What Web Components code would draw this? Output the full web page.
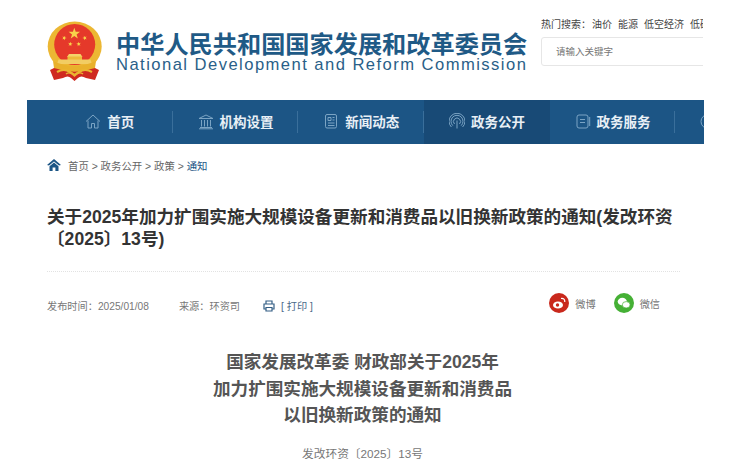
<!DOCTYPE html>
<html lang="zh">
<head>
<meta charset="utf-8">
<style>
  html, body { margin: 0; padding: 0; background: #fff; overflow: hidden; }
  body { font-family: "Liberation Sans", "Noto Sans CJK SC", sans-serif; color: #333; }
  #page { display: block; width: 704px; height: 473px; overflow: hidden; }
</style>
</head>
<body>
<div id="page">
  <site-header></site-header>
  <main-nav>
    <nav-item label="首页" icon="home"></nav-item>
    <nav-item label="机构设置" icon="bank"></nav-item>
    <nav-item label="新闻动态" icon="news"></nav-item>
    <nav-item label="政务公开" icon="signal" active></nav-item>
    <nav-item label="政务服务" icon="doc"></nav-item>
    <nav-item icon="chat" last></nav-item>
  </main-nav>
  <bread-crumb></bread-crumb>
  <article-view></article-view>
</div>

<script>
const FONT = '"Liberation Sans", "Noto Sans CJK SC", sans-serif';

// Five pointed star for the emblem
function star(cx, cy, r, rot = 0) {
    const pts = [];
    for (let i = 0; i < 10; i++) {
        const len = i % 2 ? r * 0.4 : r;
        const a = (rot - 90 + i * 36) * Math.PI / 180;
        pts.push(`${(cx + len * Math.cos(a)).toFixed(2)},${(cy + len * Math.sin(a)).toFixed(2)}`);
    }
    return `<polygon points="${pts.join(' ')}" fill="#f8d24a"/>`;
}

/**
 * Top band: national emblem, commission name, hot searches and search box
 */
class SiteHeader extends HTMLElement {
    connectedCallback() {
        this.root = this.attachShadow({mode: 'open'});
        this.root.innerHTML = `
            <style>
                :host { display: flex; height: 100px; padding-left: 46px; box-sizing: border-box; font-family: ${FONT}; overflow: hidden; }
                .emblem { width: 57px; height: 61px; margin-top: 21px; flex: none; }
                .name { margin-left: 13px; margin-top: 33px; width: 412px; flex: none; color: #1f5a86; }
                .cn { font-size: 24.2px; line-height: 24px; font-weight: 700; white-space: nowrap; }
                .en { font-size: 16.6px; line-height: 16px; margin-top: 0; letter-spacing: 1.45px; white-space: nowrap; color: #2a5f88; }
                .side { margin-left: 13px; margin-top: 18px; flex: none; width: 162px; overflow: hidden; }
                .hot { font-size: 10px; line-height: 14px; color: #444; white-space: nowrap; }
                .hot span { margin-right: 6px; }
                .hot span:first-child { margin-right: 1px; }
                .box { margin-top: 5px; height: 29px; width: 190px; border: 1px solid #e6e6e6; border-radius: 3px; box-sizing: border-box; padding-left: 14px; font-size: 9.5px; line-height: 27px; color: #777; }
            </style>
            <svg class="emblem" viewBox="0 0 57 61">
                <path d="M10 46 L4 49 L8 59 L17 57 Q22 54 25 57 L28.5 60 L32 57 Q35 54 40 57 L49 59 L53 49 L47 46 Z" fill="#cf2a20"/>
                <ellipse cx="28.7" cy="25.5" rx="27" ry="25" fill="#ecb733"/>
                <circle cx="28.7" cy="23.5" r="20.5" fill="#e5392a"/>
                ${star(28.3, 12.7, 6)}
                ${star(18.3, 17, 2.4, 20)}
                ${star(38.7, 17, 2.4, -20)}
                ${star(24.3, 23, 2.4, 10)}
                ${star(32.7, 23, 2.4, -10)}
                <path d="M23 33 L21 36 H36.5 L34.5 33 Z" fill="#f5d46a"/>
                <rect x="21.5" y="35.5" width="14.5" height="3.5" fill="#eebb3a"/>
                <path d="M12.5 38.5 H44.5 L46 43 H11 Z" fill="#f2cd63"/>
                <path d="M7 40 Q28 50 50 40 L49 47 Q28 54 8 47 Z" fill="#e9b12c"/>
                <path d="M11 51 Q18 47 24 51 L28.5 54 L33 51 Q39 47 46 51" stroke="#eab531" stroke-width="2.2" fill="none"/>
                <path d="M20 53 Q24 50 28.5 55 Q33 50 37 53" stroke="#eab531" stroke-width="1.4" fill="none"/>
            </svg>
            <div class="name">
                <div class="cn">中华人民共和国国家发展和改革委员会</div>
                <div class="en">National Development and Reform Commission</div>
            </div>
            <div class="side">
                <div class="hot"><span>热门搜索：</span><span>油价</span><span>能源</span><span>低空经济</span><span>低碳</span></div>
                <div class="box">请输入关键字</div>
            </div>`;
    }
}
customElements.define('site-header', SiteHeader);

/**
 * Blue navigation bar
 */
class MainNav extends HTMLElement {
    connectedCallback() {
        this.root = this.attachShadow({mode: 'open'});
        this.root.innerHTML = `
            <style>
                :host { display: flex; height: 44px; margin-left: 27px; padding-left: 20px; box-sizing: border-box; background: #1c5585; overflow: hidden; }
            </style>
            <slot></slot>`;
    }
}
customElements.define('main-nav', MainNav);

const NAV_ICONS = {
    home: '<path d="M1 8.5 L8 2 L15 8.5 M3 7.5 V15 H6.5 V10.5 H9.5 V15 H13 V7.5"/>',
    bank: '<path d="M1 5.5 L8 2 L15 5.5 Z M2 14.5 H14 M1 15.8 H15 M3.5 7 V13.5 M6.5 7 V13.5 M9.5 7 V13.5 M12.5 7 V13.5"/>',
    news: '<rect x="2.5" y="1.5" width="11" height="13.5" rx="1.5"/><path d="M5 4.5 H8 V7.5 H5 Z M9.5 4.5 H11.5 M9.5 7 H11.5 M5 10 H11.5 M5 12.5 H11.5"/>',
    signal: '<path d="M8 15.5 V7.5 M5.5 11 A3.5 3.5 0 1 1 10.5 11 M3.8 12.6 A6 6 0 1 1 12.2 12.6 M2.4 14 A8 8 0 1 1 13.6 14"/>',
    doc: '<rect x="2" y="2" width="11" height="13" rx="2"/><path d="M5 6.5 H10 M5 9.5 H10 M14.7 4 V13"/>',
    chat: '<circle cx="9" cy="8.5" r="7"/>'
};

/**
 * One navigation entry: icon plus label, divided from its neighbours
 */
class NavItem extends HTMLElement {
    connectedCallback() {
        const icon = NAV_ICONS[this.getAttribute('icon')];
        const label = this.getAttribute('label');
        this.root = this.attachShadow({mode: 'open'});
        this.root.innerHTML = `
            <style>
                :host { display: flex; flex: none; width: 125.7px; height: 44px; padding-bottom: 2px; box-sizing: border-box; align-items: center; justify-content: center; gap: 6px; position: relative; font-family: ${FONT}; font-size: 13.5px; font-weight: 700; color: #e8eff5; white-space: nowrap; }
                :host([active]) { background: #184a76; }
                :host::after { content: ""; position: absolute; right: 0; top: 11px; height: 22px; width: 1px; background: #3a6f9b; }
                :host([active])::after { display: none; }
                :host([last]) { justify-content: flex-start; padding-left: 24px; }
                svg { width: 16px; height: 17px; fill: none; stroke: #7ba4c4; stroke-width: 1; flex: none; }
            </style>
            <svg viewBox="0 0 16 17">${icon}</svg>${label ? `<span>${label}</span>` : ''}`;
    }
}
customElements.define('nav-item', NavItem);

/**
 * Breadcrumb row under the navigation bar
 */
class BreadCrumb extends HTMLElement {
    connectedCallback() {
        this.root = this.attachShadow({mode: 'open'});
        this.root.innerHTML = `
            <style>
                :host { display: flex; align-items: center; height: 16px; margin: 13px 0 0 47px; font-family: ${FONT}; font-size: 10.4px; color: #666; white-space: nowrap; }
                svg { width: 14px; height: 12px; margin-right: 7px; fill: #1c5585; }
                b { font-weight: 400; color: #1c5585; }
            </style>
            <svg viewBox="0 0 14 12"><path d="M7 0 L14 6 L12 6.6 L7 2.4 L2 6.6 L0 6 Z M7 3.4 L11.5 7.2 V12 H8.4 V8.4 H5.6 V12 H2.5 V7.2 Z"/></svg>
            <span>首页 &gt; 政务公开 &gt; 政策 &gt; <b>通知</b></span>`;
    }
}
customElements.define('bread-crumb', BreadCrumb);

/**
 * Article: title, meta row with sharing, centred heading and document number
 */
class ArticleView extends HTMLElement {
    connectedCallback() {
        this.root = this.attachShadow({mode: 'open'});
        this.root.innerHTML = `
            <style>
                :host { display: block; padding: 0 24px 0 47px; font-family: ${FONT}; }
                h1 { margin: 33px 0 0; font-size: 17.6px; line-height: 22px; font-weight: 700; color: #333; }
                .meta { display: flex; align-items: center; margin-top: 21px; padding-top: 21px; border-top: 1px dotted #e2e2e2; height: 24px; font-size: 10.2px; color: #777; white-space: nowrap; }
                .src { margin-left: 30px; }
                .print { display: flex; align-items: center; gap: 6px; margin-left: 23px; color: #4a6a88; }
                .print svg { width: 12px; height: 12px; margin-top: 2px; fill: none; stroke: #345f85; stroke-width: 1.2; }
                .share { display: flex; align-items: center; margin-left: auto; margin-right: 20px; margin-bottom: 4px; }
                .share svg { width: 20px; height: 20px; margin-right: 6px; }
                .share span + svg { margin-left: 18px; }
                h2 { margin: 32px 0 0; width: 631px; text-align: center; font-size: 17.6px; line-height: 26.5px; font-weight: 700; color: #555; }
                .no { width: 631px; text-align: center; margin-top: 17px; font-size: 11.7px; line-height: 16px; color: #777; }
            </style>
            <h1>关于2025年加力扩围实施大规模设备更新和消费品以旧换新政策的通知(发改环资〔2025〕13号)</h1>
            <div class="meta">
                <span>发布时间：2025/01/08</span>
                <span class="src">来源：环资司</span>
                <span class="print">
                    <svg viewBox="0 0 12 12"><path d="M3 4 V1 H9 V4 M3 9 H1 V4 H11 V9 H9 M3 7.5 H9 V11 H3 Z"/></svg>
                    <span>[ 打印 ]</span>
                </span>
                <span class="share">
                    <svg viewBox="0 0 20 20"><circle cx="10" cy="10" r="10" fill="#c9281c"/><ellipse cx="9" cy="12" rx="5" ry="3.6" fill="#fff"/><circle cx="8.5" cy="12" r="1.7" fill="#c9281c"/><path d="M12 5.5 Q16 5 15.8 9" stroke="#fff" stroke-width="1.2" fill="none"/></svg>
                    <span>微博</span>
                    <svg viewBox="0 0 20 20"><circle cx="10" cy="10" r="10" fill="#45b035"/><ellipse cx="8.3" cy="8.6" rx="4.6" ry="3.8" fill="#fff"/><ellipse cx="12.2" cy="11.8" rx="3.9" ry="3.2" fill="#fff" stroke="#45b035" stroke-width=".7"/></svg>
                    <span>微信</span>
                </span>
            </div>
            <h2>国家发展改革委 财政部关于2025年<br>加力扩围实施大规模设备更新和消费品<br>以旧换新政策的通知</h2>
            <div class="no">发改环资〔2025〕13号</div>`;
    }
}
customElements.define('article-view', ArticleView);
</script>
</body>
</html>
